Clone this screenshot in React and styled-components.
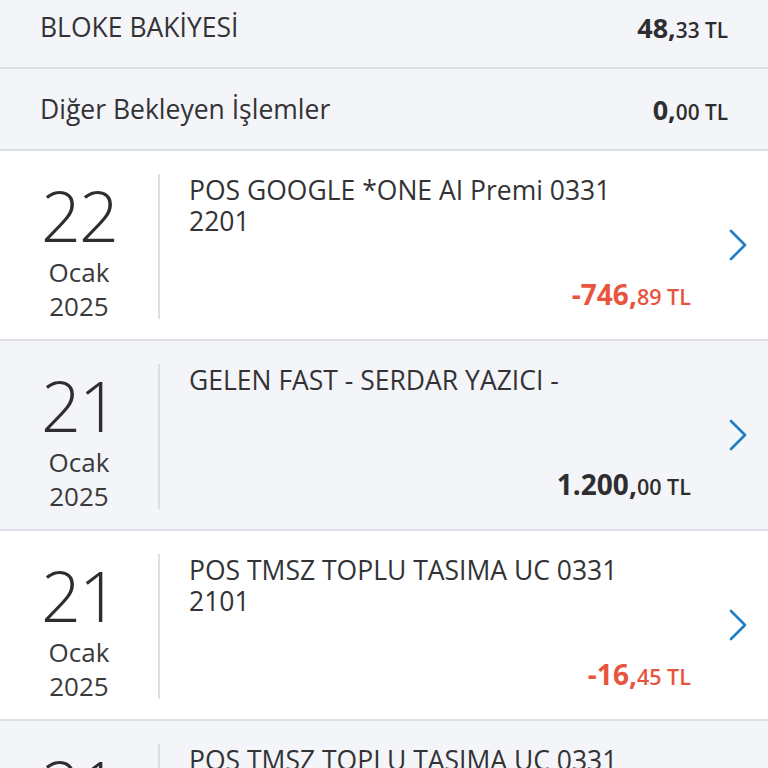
import React from 'react';
import styled, { createGlobalStyle } from 'styled-components';

const GlobalStyle = createGlobalStyle`
  html, body {
    margin: 0;
    padding: 0;
    background: #ffffff;
    font-family: "Open Sans", "Noto Sans", sans-serif;
    color: #2e2e30;
    overflow: hidden;
  }
`;

const Page = styled.div`
  width: 768px;
  margin-top: -13px;
`;

const SummaryRow = styled.div`
  display: flex;
  align-items: center;
  justify-content: space-between;
  height: 80px;
  padding: 0 40px;
  background: #f4f5f9;
  border-bottom: 2px solid #dcdfe6;
`;

const SummaryLabel = styled.span`
  font-size: 26.5px;
  color: #333336;
`;

const Amount = styled.span`
  font-weight: 700;
  font-size: ${p => p.$size || 24}px;
  color: ${p => (p.$negative ? '#e8553e' : '#2e2e30')};
  white-space: nowrap;
`;

const Small = styled.span`
  font-size: 0.77em;
  font-weight: 600;
`;

const TxRow = styled.div`
  display: grid;
  grid-template-columns: 158px 2px 1fr 77px;
  height: 188px;
  background: ${p => (p.$shaded ? '#f4f5f9' : '#ffffff')};
  border-bottom: 2px solid #dcdfe6;
`;

const DateCol = styled.div`
  display: flex;
  flex-direction: column;
  align-items: center;
  padding-top: 30px;
  color: #2e2e30;
`;

const Day = styled.div`
  font-size: 70px;
  line-height: 68px;
  font-weight: 300;
  letter-spacing: -2px;
`;

const MonthYear = styled.div`
  margin-top: 6px;
  font-size: 26px;
  line-height: 34px;
  text-align: center;
  color: #3a3a3d;
`;

const Divider = styled.div`
  background: #dcdfe6;
  margin: 23px 0 20px;
`;

const Content = styled.div`
  display: flex;
  flex-direction: column;
  justify-content: space-between;
  padding: 24px 0 26px 29px;
`;

const Description = styled.div`
  font-size: 26.5px;
  line-height: 31px;
  color: #333336;
  max-width: 450px;
`;

const AmountLine = styled.div`
  text-align: right;
`;

const ChevronCol = styled.div`
  display: flex;
  align-items: center;
  justify-content: flex-end;
  padding-right: 19px;
`;

const Chevron = () => (
  <svg width="22" height="34" viewBox="0 0 22 34" fill="none">
    <path d="M4 3 L18 17 L4 31" stroke="#1c7ec4" strokeWidth="2.6" strokeLinecap="round" strokeLinejoin="round" />
  </svg>
);

const Money = ({ whole, cents, negative, size }) => (
  <Amount $negative={negative} $size={size}>
    {whole},<Small>{cents} TL</Small>
  </Amount>
);

const transactions = [
  { day: '22', desc: 'POS GOOGLE *ONE AI Premi 0331 2201', whole: '-746', cents: '89', negative: true },
  { day: '21', desc: 'GELEN FAST - SERDAR YAZICI -', whole: '1.200', cents: '00', negative: false },
  { day: '21', desc: 'POS TMSZ TOPLU TASIMA UC 0331 2101', whole: '-16', cents: '45', negative: true },
  { day: '21', desc: 'POS TMSZ TOPLU TASIMA UC 0331 2101', whole: '-16', cents: '45', negative: true },
];

export default function App() {
  return (
    <Page>
      <GlobalStyle />
      <SummaryRow>
        <SummaryLabel>BLOKE BAKİYESİ</SummaryLabel>
        <Money whole="48" cents="33" size={27} />
      </SummaryRow>
      <SummaryRow>
        <SummaryLabel>Diğer Bekleyen İşlemler</SummaryLabel>
        <Money whole="0" cents="00" size={27} />
      </SummaryRow>
      {transactions.map((t, i) => (
        <TxRow key={i} $shaded={i % 2 === 1}>
          <DateCol>
            <Day>{t.day}</Day>
            <MonthYear>Ocak<br />2025</MonthYear>
          </DateCol>
          <Divider />
          <Content>
            <Description>{t.desc}</Description>
            <AmountLine>
              <Money whole={t.whole} cents={t.cents} negative={t.negative} size={28} />
            </AmountLine>
          </Content>
          <ChevronCol>
            <Chevron />
          </ChevronCol>
        </TxRow>
      ))}
    </Page>
  );
}
